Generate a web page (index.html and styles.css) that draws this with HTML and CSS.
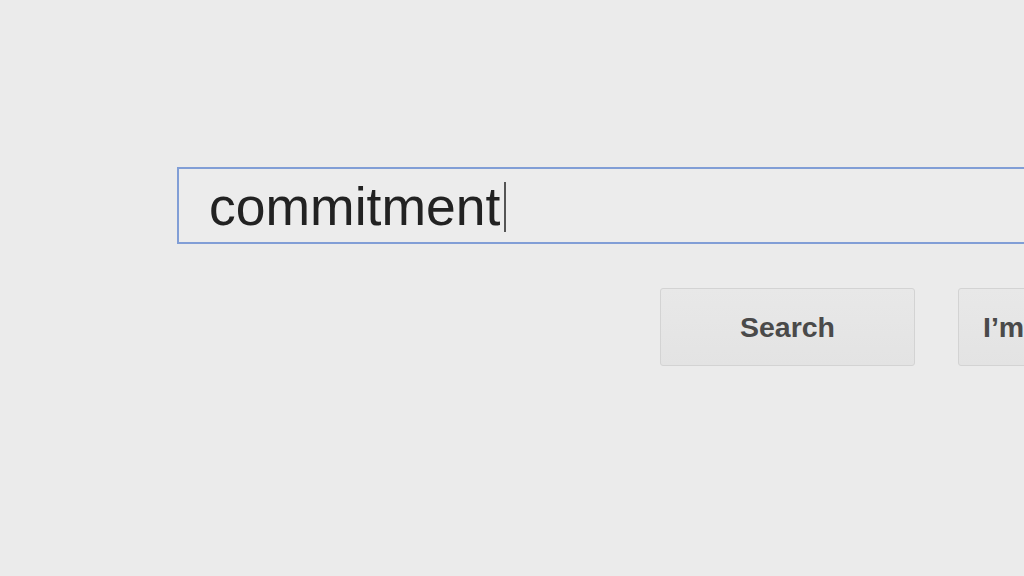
FILE: index.html
```html
<!DOCTYPE html>
<html lang="en">
<head>
  <meta charset="UTF-8">
  <title>Search</title>
  <link rel="stylesheet" href="styles.css">
</head>
<body>

  <div class="page">
    <div class="search-box">
      <span class="query">commitment</span><span class="caret"></span>
    </div>

    <div class="buttons">
      <button class="btn">Search</button>
      <button class="btn">I’m Feeling Lucky</button>
    </div>
  </div>

</body>
</html>
```

FILE: styles.css
```css
body {
  margin: 0;
  background: #ebebeb;
  font-family: "Liberation Sans", Arial, sans-serif;
  overflow: hidden;
  height: 576px;
}

.page {
  padding: 167px 0 0 177px;
}

.search-box {
  width: 900px;
  height: 73px;
  border: 2px solid #819ed6;
  background: #ececec;
  display: flex;
  align-items: center;
  padding-left: 30px;
  box-sizing: content-box;
}

.query {
  font-size: 53.5px;
  color: #222;
  line-height: 1;
  margin-top: 2px;
}

.caret {
  display: inline-block;
  width: 2px;
  height: 50px;
  background: #555;
  margin-left: 4px;
  margin-top: 2px;
}

.buttons {
  display: flex;
  gap: 43px;
  margin: 44px 0 0 483px;
  width: 1000px;
}

.btn {
  flex: none;
  width: 255px;
  height: 78px;
  border: 1px solid #d3d3d3;
  border-radius: 3px;
  background: linear-gradient(#e8e8e8, #e3e3e3);
  font-family: "Liberation Sans", Arial, sans-serif;
  font-weight: bold;
  font-size: 28.5px;
  color: #4a4a4a;
  white-space: nowrap;
  padding: 0;
  text-align: center;
}

.btn + .btn {
  width: 360px;
  text-align: left;
  padding-left: 24px;
}
```
